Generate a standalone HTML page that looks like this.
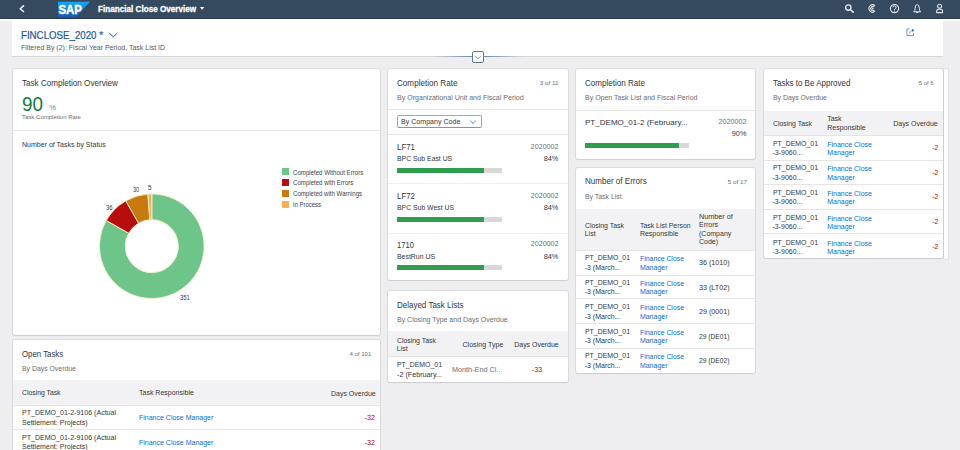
<!DOCTYPE html>
<html><head><meta charset="utf-8">
<style>
*{box-sizing:border-box;margin:0;padding:0}
html,body{width:960px;height:450px;overflow:hidden;background:#eeeef1;font-family:"Liberation Sans",sans-serif;color:#32363a}
.a{position:absolute}
#shell{position:absolute;left:0;top:0;width:960px;height:19px;background:#354a5f;border-bottom:1px solid #2a3b4c}
#wstrip{position:absolute;left:0;top:19px;width:960px;height:2px;background:#fff}
#hdr{position:absolute;left:12px;top:19px;width:931px;height:38px;background:#fff;border-bottom:1px solid #d5d7d9}
.card{position:absolute;background:#fff;border-radius:2px;box-shadow:0 0 0 1px rgba(0,0,0,.07),0 1px 1.5px rgba(0,0,0,.08);overflow:hidden}
.t{position:absolute;white-space:nowrap;line-height:1}
.hl{position:absolute;height:1px;background:#e5e5e5}
.th{position:absolute;background:#f2f2f4}
.bar{position:absolute;height:5px;background:#d8d8d8}
.bar i{position:absolute;left:0;top:0;bottom:0;background:#2f9c4e}
.lg{position:absolute;width:7px;height:7px}
</style></head><body>
<div id="shell">
  <svg class="a" style="left:0;top:0" width="960" height="19" viewBox="0 0 960 19">
    <path d="M24 5.4 L20.3 8.7 L24 12" fill="none" stroke="#eef2f6" stroke-width="1.5"/>
    <defs><linearGradient id="sapg" x1="0" y1="0" x2="0" y2="1"><stop offset="0" stop-color="#14a8ee"/><stop offset="0.55" stop-color="#1a7fd6"/><stop offset="1" stop-color="#1b53b3"/></linearGradient></defs>
    <path d="M58 1.7 H89.9 L76 17.3 H58 Z" fill="url(#sapg)"/>
    <text x="58.4" y="14.3" font-family="Liberation Sans" font-weight="bold" font-size="13.6" fill="#fff" stroke="#fff" stroke-width="0.5" textLength="23.4" lengthAdjust="spacingAndGlyphs">SAP</text>
    <path d="M199.9 6.9 H204.3 L202.1 9.7 Z" fill="#fff"/>
    <!-- search -->
    <circle cx="848.3" cy="7.6" r="2.7" fill="none" stroke="#e4e9ef" stroke-width="1.4"/>
    <path d="M850.3 9.6 L853.2 12.2" stroke="#e4e9ef" stroke-width="1.6" stroke-linecap="round"/>
    <!-- C icon -->
    <path d="M875.1 5.9 A3.6 3.6 0 1 0 875.1 11.1" fill="none" stroke="#e4e9ef" stroke-width="1.1"/>
    <path d="M874.2 7 A2.1 2.1 0 1 0 874.2 10" fill="none" stroke="#e4e9ef" stroke-width="1.1"/>
    <circle cx="872.6" cy="8.5" r="0.9" fill="#e4e9ef"/>
    <!-- help -->
    <circle cx="894.5" cy="8.6" r="4.1" fill="none" stroke="#e4e9ef" stroke-width="1.1"/>
    <path d="M892.9 7.3 A1.6 1.5 0 1 1 895.2 8.6 Q894.5 9.1 894.5 10" fill="none" stroke="#e4e9ef" stroke-width="1"/>
    <circle cx="894.5" cy="11.2" r="0.6" fill="#e4e9ef"/>
    <!-- bell -->
    <path d="M913.7 11.8 Q915.1 10.9 915.1 8.4 Q915.1 4.6 917.2 4.6 Q919.3 4.6 919.3 8.4 Q919.3 10.9 920.7 11.8 Z" fill="none" stroke="#e4e9ef" stroke-width="1" stroke-linejoin="round"/>
    <ellipse cx="917.2" cy="12.4" rx="1.2" ry="0.7" fill="#e4e9ef"/>
    <!-- user -->
    <circle cx="939.6" cy="6.3" r="2" fill="none" stroke="#e4e9ef" stroke-width="1.05"/>
    <path d="M936.7 12.6 V11 Q936.7 9.2 939.6 9.2 Q942.6 9.2 942.6 11 V12.6 Z" fill="none" stroke="#e4e9ef" stroke-width="1.05" stroke-linejoin="round"/>
  </svg>
</div>
<div id="wstrip"></div>
<div id="hdr">
  <svg class="a" style="left:0;top:0" width="931" height="38" viewBox="12 19 931 38">
    <path d="M109.2 33 L113.3 36.9 L117.4 33" fill="none" stroke="#1f5a96" stroke-width="1"/>
    <path d="M909.4 28.9 H906.9 V35.5 H913.5 V33.2" fill="none" stroke="#5d8cc4" stroke-width="0.9"/>
    <path d="M909.2 33.6 Q909.8 30.8 912.6 30.4" fill="none" stroke="#5d8cc4" stroke-width="0.8"/>
    <path d="M912 28.7 L914.4 30.3 L912.3 31.9 Z" fill="#2f66a6"/>
  </svg>
</div>
<!-- collapse line & button -->
<div class="a" style="left:432px;top:56.3px;width:92px;height:1.2px;background:linear-gradient(90deg,rgba(120,140,160,0),#7890a8 40%,#7890a8 60%,rgba(120,140,160,0))"></div>
<div class="a" style="left:471.5px;top:50.5px;width:12.5px;height:12.5px;border:1.2px solid #5f7892;border-radius:2px;background:#fff"></div>
<svg class="a" style="left:471px;top:50px" width="14" height="14"><path d="M4.3 6.3 L7 8.7 L9.7 6.3" fill="none" stroke="#5f7892" stroke-width="0.8"/></svg>

<!-- card 1 -->
<div class="card" style="left:12.6px;top:68.6px;width:367px;height:266.4px">
  <div class="hl" style="left:0;top:61.6px;width:367px"></div>
</div>
<svg class="a" style="left:0;top:0" width="960" height="450"><path d="M151.80 193.90 A52.3 52.3 0 1 1 106.25 220.50 L128.72 233.18 A26.5 26.5 0 1 0 151.80 219.70 Z" fill="#6dc58a" stroke="#fbf0d0" stroke-width="0.9"/><path d="M106.25 220.50 A52.3 52.3 0 0 1 125.76 200.84 L138.61 223.22 A26.5 26.5 0 0 0 128.72 233.18 Z" fill="#b80d0d" stroke="#fbf0d0" stroke-width="0.9"/><path d="M125.76 200.84 A52.3 52.3 0 0 1 147.91 194.04 L149.83 219.77 A26.5 26.5 0 0 0 138.61 223.22 Z" fill="#c8790f" stroke="#fbf0d0" stroke-width="0.9"/><path d="M147.91 194.04 A52.3 52.3 0 0 1 151.80 193.90 L151.80 219.70 A26.5 26.5 0 0 0 149.83 219.77 Z" fill="#f1b25a" stroke="#fbf0d0" stroke-width="0.9"/></svg>
<div class="lg" style="left:281.9px;top:168.1px;background:#6dc58a"></div>
<div class="lg" style="left:281.9px;top:179px;background:#b80d0d"></div>
<div class="lg" style="left:281.9px;top:189.9px;background:#c8790f"></div>
<div class="lg" style="left:281.9px;top:200.6px;background:#f1b25a"></div>

<!-- card 2 -->
<div class="card" style="left:12.6px;top:339.7px;width:367px;height:120px">
  <div class="th" style="left:0;top:40.3px;width:367px;height:26px;border-bottom:1px solid #e4e4e6"></div>
  <div class="hl" style="left:0;top:89.5px;width:367px"></div>
</div>

<!-- card 3 -->
<div class="card" style="left:388px;top:69px;width:180px;height:211px">
  <div class="hl" style="left:0;top:40px;width:180px"></div>
  <div class="a" style="left:8.5px;top:46.2px;width:85.5px;height:13px;border:1px solid #a3a8ad;border-bottom-color:#8d9297;border-radius:2px"></div>
  <svg class="a" style="left:0;top:0" width="180" height="213"><path d="M82.2 51.6 L85 54.3 L87.8 51.6" fill="none" stroke="#3f7fc4" stroke-width="0.9"/></svg>
  <div class="hl" style="left:0;top:64.7px;width:180px"></div>
  <div class="hl" style="left:0;top:113.8px;width:180px;background:#efefef"></div>
  <div class="hl" style="left:0;top:163.6px;width:180px;background:#efefef"></div>
</div>
<div class="bar" style="left:396.8px;top:167.7px;width:105.3px"><i style="width:87.2px"></i></div>
<div class="bar" style="left:396.8px;top:216.7px;width:105.3px"><i style="width:87.2px"></i></div>
<div class="bar" style="left:396.8px;top:265.3px;width:105.3px"><i style="width:87.2px"></i></div>

<!-- card 4 -->
<div class="card" style="left:388px;top:290.5px;width:180px;height:91px">
  <div class="th" style="left:0;top:40.2px;width:180px;height:26px;border-bottom:1px solid #e4e4e6"></div>
</div>

<!-- card 5 -->
<div class="card" style="left:576px;top:69px;width:179px;height:90px">
  <div class="hl" style="left:0;top:40.9px;width:179px"></div>
</div>
<div class="bar" style="left:584.7px;top:143.2px;width:104.8px"><i style="width:94.6px"></i></div>

<!-- card 6 -->
<div class="card" style="left:576px;top:168px;width:179px;height:205px">
  <div class="th" style="left:0;top:40.5px;width:179px;height:42.5px;border-bottom:1px solid #e4e4e6"></div>
  <div class="hl" style="left:0;top:106.8px;width:179px"></div>
  <div class="hl" style="left:0;top:129.6px;width:179px"></div>
  <div class="hl" style="left:0;top:154.9px;width:179px"></div>
  <div class="hl" style="left:0;top:179.5px;width:179px"></div>
</div>

<!-- card 7 -->
<div class="card" style="left:763.7px;top:69px;width:179px;height:189px">
  <div class="th" style="left:0;top:41.7px;width:179px;height:25px;border-bottom:1px solid #e4e4e6"></div>
  <div class="hl" style="left:0;top:90.6px;width:179px"></div>
  <div class="hl" style="left:0;top:115px;width:179px"></div>
  <div class="hl" style="left:0;top:139.6px;width:179px"></div>
  <div class="hl" style="left:0;top:164.2px;width:179px"></div>
</div>

<div class="a" style="left:943.5px;top:69px;width:4px;height:190px;background:#fff;box-shadow:0 0 0 1px rgba(0,0,0,.06)"></div>
<span class="t" style="left:97.80px;top:4.66px;font-size:8.4px;color:#ffffff;font-weight:bold;transform-origin:0 0;transform:scaleX(0.972);-webkit-text-stroke:0.3px #fff;">Financial Close Overview</span>
<span class="t" style="left:21.30px;top:30.63px;font-size:10.2px;color:#1f5a96;transform-origin:0 0;transform:scaleX(0.952);-webkit-text-stroke:0.2px #1f5a96;">FINCLOSE_2020 *</span>
<span class="t" style="left:21.30px;top:45.43px;font-size:6.9px;color:#55595d;transform-origin:0 0;transform:scaleX(1.015);">Filtered By (2): Fiscal Year Period, Task List ID</span>
<span class="t" style="left:22.00px;top:79.73px;font-size:8.2px;color:#32363a;transform-origin:0 0;transform:scaleX(0.989);">Task Completion Overview</span>
<span class="t" style="left:22.00px;top:93.67px;font-size:20.5px;color:#107e3e;transform-origin:0 0;transform:scaleX(0.921);">90</span>
<span class="t" style="left:48.80px;top:104.15px;font-size:7px;color:#3fa45b;transform-origin:0 0;transform:scaleX(1.125);">%</span>
<span class="t" style="left:22.00px;top:114.43px;font-size:6.2px;color:#6a6d70;transform-origin:0 0;transform:scaleX(0.973);">Task Completion Rate</span>
<span class="t" style="left:21.50px;top:141.21px;font-size:7.4px;color:#32363a;transform-origin:0 0;transform:scaleX(0.950);">Number of Tasks by Status</span>
<span class="t" style="left:180.00px;top:295.18px;font-size:6.5px;color:#32363a;transform-origin:0 0;transform:scaleX(0.894);">351</span>
<span class="t" style="left:106.00px;top:204.57px;font-size:6.5px;color:#32363a;transform-origin:0 0;transform:scaleX(0.899);">36</span>
<span class="t" style="left:132.80px;top:186.57px;font-size:6.5px;color:#32363a;transform-origin:0 0;transform:scaleX(0.858);">30</span>
<span class="t" style="left:147.80px;top:185.07px;font-size:6.5px;color:#32363a;transform-origin:0 0;transform:scaleX(0.968);">5</span>
<span class="t" style="left:292.60px;top:169.57px;font-size:6.5px;color:#3d4145;transform-origin:0 0;transform:scaleX(0.939);">Completed Without Errors</span>
<span class="t" style="left:292.60px;top:180.32px;font-size:6.5px;color:#3d4145;transform-origin:0 0;transform:scaleX(0.939);">Completed with Errors</span>
<span class="t" style="left:292.60px;top:191.07px;font-size:6.5px;color:#3d4145;transform-origin:0 0;transform:scaleX(0.936);">Completed with Warnings</span>
<span class="t" style="left:292.60px;top:201.82px;font-size:6.5px;color:#3d4145;transform-origin:0 0;transform:scaleX(0.909);">In Process</span>
<span class="t" style="left:21.70px;top:351.13px;font-size:8.2px;color:#32363a;transform-origin:0 0;transform:scaleX(0.954);">Open Tasks</span>
<span class="t" style="left:348.59px;top:350.53px;font-size:6.2px;color:#6a6d70;transform-origin:22.41px 0;transform:scaleX(0.982);">4 of 101</span>
<span class="t" style="left:21.70px;top:365.18px;font-size:7.2px;color:#6a6d70;transform-origin:0 0;transform:scaleX(0.957);">By Days Overdue</span>
<span class="t" style="left:21.70px;top:389.35px;font-size:7.0px;color:#32363a;transform-origin:0 0;transform:scaleX(0.973);">Closing Task</span>
<span class="t" style="left:139.00px;top:389.35px;font-size:7.0px;color:#32363a;">Task Responsible</span>
<span class="t" style="left:330.66px;top:389.55px;font-size:7.0px;color:#32363a;transform-origin:44.74px 0;transform:scaleX(1.001);">Days Overdue</span>
<span class="t" style="left:21.60px;top:409.35px;font-size:7.0px;color:#32363a;transform-origin:0 0;transform:scaleX(1.007);">PT_DEMO_01-2-9106 (Actual</span>
<span class="t" style="left:21.60px;top:418.95px;font-size:7.0px;color:#32363a;transform-origin:0 0;transform:scaleX(1.011);">Settlement: Projects)</span>
<span class="t" style="left:139.00px;top:414.05px;font-size:7.0px;color:#0a6ed1;">Finance Close Manager</span>
<span class="t" style="left:365.28px;top:414.45px;font-size:7.0px;color:#bb0000;transform-origin:10.12px 0;transform:scaleX(1.028);">-32</span>
<span class="t" style="left:21.60px;top:433.85px;font-size:7.0px;color:#32363a;transform-origin:0 0;transform:scaleX(1.007);">PT_DEMO_01-2-9106 (Actual</span>
<span class="t" style="left:21.60px;top:443.45px;font-size:7.0px;color:#32363a;transform-origin:0 0;transform:scaleX(1.011);">Settlement: Projects)</span>
<span class="t" style="left:139.00px;top:438.55px;font-size:7.0px;color:#0a6ed1;">Finance Close Manager</span>
<span class="t" style="left:365.28px;top:438.95px;font-size:7.0px;color:#bb0000;transform-origin:10.12px 0;transform:scaleX(1.028);">-32</span>
<span class="t" style="left:396.80px;top:80.33px;font-size:8.2px;color:#32363a;transform-origin:0 0;transform:scaleX(0.991);">Completion Rate</span>
<span class="t" style="left:540.20px;top:80.13px;font-size:6.2px;color:#6a6d70;transform-origin:18.50px 0;transform:scaleX(1.011);">3 of 11</span>
<span class="t" style="left:396.80px;top:94.48px;font-size:7.2px;color:#6a6d70;transform-origin:0 0;transform:scaleX(0.982);">By Organizational Unit and Fiscal Period</span>
<span class="t" style="left:401.30px;top:118.31px;font-size:7.4px;color:#32363a;transform-origin:0 0;transform:scaleX(0.958);">By Company Code</span>
<span class="t" style="left:396.80px;top:142.86px;font-size:8.4px;color:#32363a;transform-origin:0 0;transform:scaleX(0.940);">LF71</span>
<span class="t" style="left:532.23px;top:143.62px;font-size:6.8px;color:#6a6d70;transform-origin:26.47px 0;transform:scaleX(1.046);">2020002</span>
<span class="t" style="left:396.80px;top:155.25px;font-size:7.0px;color:#32363a;transform-origin:0 0;transform:scaleX(0.978);">BPC Sub East US</span>
<span class="t" style="left:544.29px;top:154.88px;font-size:7.2px;color:#32363a;transform-origin:14.41px 0;transform:scaleX(1.020);">84%</span>
<span class="t" style="left:396.80px;top:191.76px;font-size:8.4px;color:#32363a;transform-origin:0 0;transform:scaleX(0.940);">LF72</span>
<span class="t" style="left:532.23px;top:192.52px;font-size:6.8px;color:#6a6d70;transform-origin:26.47px 0;transform:scaleX(1.046);">2020002</span>
<span class="t" style="left:396.80px;top:204.15px;font-size:7.0px;color:#32363a;transform-origin:0 0;transform:scaleX(0.979);">BPC Sub West US</span>
<span class="t" style="left:544.29px;top:203.78px;font-size:7.2px;color:#32363a;transform-origin:14.41px 0;transform:scaleX(1.020);">84%</span>
<span class="t" style="left:396.80px;top:240.66px;font-size:8.4px;color:#32363a;transform-origin:0 0;transform:scaleX(0.910);">1710</span>
<span class="t" style="left:532.23px;top:241.42px;font-size:6.8px;color:#6a6d70;transform-origin:26.47px 0;transform:scaleX(1.046);">2020002</span>
<span class="t" style="left:396.80px;top:253.05px;font-size:7.0px;color:#32363a;transform-origin:0 0;transform:scaleX(0.987);">BestRun US</span>
<span class="t" style="left:544.29px;top:252.68px;font-size:7.2px;color:#32363a;transform-origin:14.41px 0;transform:scaleX(1.020);">84%</span>
<span class="t" style="left:396.80px;top:301.93px;font-size:8.2px;color:#32363a;transform-origin:0 0;transform:scaleX(0.976);">Delayed Task Lists</span>
<span class="t" style="left:396.80px;top:315.78px;font-size:7.2px;color:#6a6d70;transform-origin:0 0;transform:scaleX(0.973);">By Closing Type and Days Overdue</span>
<span class="t" style="left:396.80px;top:336.75px;font-size:7.0px;color:#32363a;transform-origin:0 0;transform:scaleX(0.983);">Closing Task</span>
<span class="t" style="left:396.80px;top:344.55px;font-size:7.0px;color:#32363a;">List</span>
<span class="t" style="left:462.73px;top:341.35px;font-size:7.0px;color:#32363a;transform-origin:40.47px 0;transform:scaleX(1.013);">Closing Type</span>
<span class="t" style="left:514.46px;top:341.35px;font-size:7.0px;color:#32363a;transform-origin:44.74px 0;transform:scaleX(0.995);">Days Overdue</span>
<span class="t" style="left:396.80px;top:360.55px;font-size:7.0px;color:#32363a;transform-origin:0 0;transform:scaleX(0.989);">PT_DEMO_01</span>
<span class="t" style="left:396.80px;top:370.65px;font-size:7.0px;color:#32363a;transform-origin:0 0;transform:scaleX(1.027);">-2 (February...</span>
<span class="t" style="left:451.50px;top:366.15px;font-size:7.0px;color:#6a6d70;transform-origin:0 0;transform:scaleX(1.036);">Month-End Cl...</span>
<span class="t" style="left:531.88px;top:366.15px;font-size:7.0px;color:#bb0000;transform-origin:10.12px 0;transform:scaleX(0.988);">-33</span>
<span class="t" style="left:584.70px;top:80.33px;font-size:8.2px;color:#32363a;transform-origin:0 0;transform:scaleX(0.982);">Completion Rate</span>
<span class="t" style="left:584.70px;top:94.48px;font-size:7.2px;color:#6a6d70;transform-origin:0 0;transform:scaleX(0.975);">By Open Task List and Fiscal Period</span>
<span class="t" style="left:584.70px;top:119.27px;font-size:7.8px;color:#32363a;transform-origin:0 0;transform:scaleX(1.031);">PT_DEMO_01-2 (February...</span>
<span class="t" style="left:720.03px;top:119.32px;font-size:6.8px;color:#6a6d70;transform-origin:26.47px 0;transform:scaleX(1.058);">2020002</span>
<span class="t" style="left:732.09px;top:129.98px;font-size:7.2px;color:#32363a;transform-origin:14.41px 0;transform:scaleX(1.013);">90%</span>
<span class="t" style="left:584.70px;top:178.13px;font-size:8.2px;color:#32363a;transform-origin:0 0;transform:scaleX(0.983);">Number of Errors</span>
<span class="t" style="left:727.54px;top:178.53px;font-size:6.2px;color:#6a6d70;transform-origin:18.96px 0;transform:scaleX(1.013);">5 of 17</span>
<span class="t" style="left:584.70px;top:193.18px;font-size:7.2px;color:#6a6d70;transform-origin:0 0;transform:scaleX(0.958);">By Task List</span>
<span class="t" style="left:584.70px;top:221.65px;font-size:7.0px;color:#32363a;transform-origin:0 0;transform:scaleX(0.983);">Closing Task</span>
<span class="t" style="left:584.70px;top:229.85px;font-size:7.0px;color:#32363a;">List</span>
<span class="t" style="left:639.90px;top:221.65px;font-size:7.0px;color:#32363a;transform-origin:0 0;transform:scaleX(0.985);">Task List Person</span>
<span class="t" style="left:639.90px;top:229.85px;font-size:7.0px;color:#32363a;">Responsible</span>
<span class="t" style="left:699.00px;top:213.05px;font-size:7.0px;color:#32363a;transform-origin:0 0;transform:scaleX(1.031);">Number of</span>
<span class="t" style="left:699.00px;top:221.45px;font-size:7.0px;color:#32363a;">Errors</span>
<span class="t" style="left:699.00px;top:229.85px;font-size:7.0px;color:#32363a;">(Company</span>
<span class="t" style="left:699.00px;top:238.05px;font-size:7.0px;color:#32363a;">Code)</span>
<span class="t" style="left:584.70px;top:254.45px;font-size:7.0px;color:#32363a;transform-origin:0 0;transform:scaleX(0.989);">PT_DEMO_01</span>
<span class="t" style="left:584.70px;top:263.65px;font-size:7.0px;color:#32363a;">-3 (March...</span>
<span class="t" style="left:639.90px;top:255.35px;font-size:7.0px;color:#0a6ed1;transform-origin:0 0;transform:scaleX(0.983);">Finance Close</span>
<span class="t" style="left:639.90px;top:263.65px;font-size:7.0px;color:#0a6ed1;">Manager</span>
<span class="t" style="left:699.00px;top:259.05px;font-size:7.0px;color:#32363a;transform-origin:0 0;transform:scaleX(1.018);">36 (1010)</span>
<span class="t" style="left:584.70px;top:278.95px;font-size:7.0px;color:#32363a;transform-origin:0 0;transform:scaleX(0.989);">PT_DEMO_01</span>
<span class="t" style="left:584.70px;top:288.15px;font-size:7.0px;color:#32363a;">-3 (March...</span>
<span class="t" style="left:639.90px;top:279.85px;font-size:7.0px;color:#0a6ed1;transform-origin:0 0;transform:scaleX(0.983);">Finance Close</span>
<span class="t" style="left:639.90px;top:288.15px;font-size:7.0px;color:#0a6ed1;">Manager</span>
<span class="t" style="left:699.00px;top:283.55px;font-size:7.0px;color:#32363a;transform-origin:0 0;transform:scaleX(1.023);">33 (LT02)</span>
<span class="t" style="left:584.70px;top:303.45px;font-size:7.0px;color:#32363a;transform-origin:0 0;transform:scaleX(0.989);">PT_DEMO_01</span>
<span class="t" style="left:584.70px;top:312.65px;font-size:7.0px;color:#32363a;">-3 (March...</span>
<span class="t" style="left:639.90px;top:304.35px;font-size:7.0px;color:#0a6ed1;transform-origin:0 0;transform:scaleX(0.983);">Finance Close</span>
<span class="t" style="left:639.90px;top:312.65px;font-size:7.0px;color:#0a6ed1;">Manager</span>
<span class="t" style="left:699.00px;top:308.05px;font-size:7.0px;color:#32363a;transform-origin:0 0;transform:scaleX(1.018);">29 (0001)</span>
<span class="t" style="left:584.70px;top:327.95px;font-size:7.0px;color:#32363a;transform-origin:0 0;transform:scaleX(0.989);">PT_DEMO_01</span>
<span class="t" style="left:584.70px;top:337.15px;font-size:7.0px;color:#32363a;">-3 (March...</span>
<span class="t" style="left:639.90px;top:328.85px;font-size:7.0px;color:#0a6ed1;transform-origin:0 0;transform:scaleX(0.983);">Finance Close</span>
<span class="t" style="left:639.90px;top:337.15px;font-size:7.0px;color:#0a6ed1;">Manager</span>
<span class="t" style="left:699.00px;top:332.55px;font-size:7.0px;color:#32363a;transform-origin:0 0;transform:scaleX(0.956);">29 (DE01)</span>
<span class="t" style="left:584.70px;top:352.45px;font-size:7.0px;color:#32363a;transform-origin:0 0;transform:scaleX(0.989);">PT_DEMO_01</span>
<span class="t" style="left:584.70px;top:361.65px;font-size:7.0px;color:#32363a;">-3 (March...</span>
<span class="t" style="left:639.90px;top:353.35px;font-size:7.0px;color:#0a6ed1;transform-origin:0 0;transform:scaleX(0.983);">Finance Close</span>
<span class="t" style="left:639.90px;top:361.65px;font-size:7.0px;color:#0a6ed1;">Manager</span>
<span class="t" style="left:699.00px;top:357.05px;font-size:7.0px;color:#32363a;transform-origin:0 0;transform:scaleX(0.956);">29 (DE02)</span>
<span class="t" style="left:772.50px;top:80.33px;font-size:8.2px;color:#32363a;transform-origin:0 0;transform:scaleX(0.978);">Tasks to Be Approved</span>
<span class="t" style="left:918.39px;top:80.13px;font-size:6.2px;color:#6a6d70;transform-origin:15.51px 0;transform:scaleX(0.948);">5 of 6</span>
<span class="t" style="left:772.50px;top:94.48px;font-size:7.2px;color:#6a6d70;transform-origin:0 0;transform:scaleX(0.957);">By Days Overdue</span>
<span class="t" style="left:772.50px;top:119.95px;font-size:7.0px;color:#32363a;transform-origin:0 0;transform:scaleX(0.983);">Closing Task</span>
<span class="t" style="left:827.20px;top:115.45px;font-size:7.0px;color:#32363a;">Task</span>
<span class="t" style="left:827.20px;top:123.95px;font-size:7.0px;color:#32363a;">Responsible</span>
<span class="t" style="left:893.16px;top:119.95px;font-size:7.0px;color:#32363a;transform-origin:44.74px 0;transform:scaleX(0.995);">Days Overdue</span>
<span class="t" style="left:772.50px;top:139.65px;font-size:7.0px;color:#32363a;transform-origin:0 0;transform:scaleX(0.989);">PT_DEMO_01</span>
<span class="t" style="left:772.50px;top:148.95px;font-size:7.0px;color:#32363a;">-3-9060...</span>
<span class="t" style="left:827.20px;top:140.55px;font-size:7.0px;color:#0a6ed1;">Finance Close</span>
<span class="t" style="left:827.20px;top:148.95px;font-size:7.0px;color:#0a6ed1;">Manager</span>
<span class="t" style="left:931.68px;top:143.85px;font-size:7.0px;color:#bb0000;transform-origin:6.22px 0;transform:scaleX(0.964);">-2</span>
<span class="t" style="left:772.50px;top:164.40px;font-size:7.0px;color:#32363a;transform-origin:0 0;transform:scaleX(0.989);">PT_DEMO_01</span>
<span class="t" style="left:772.50px;top:173.70px;font-size:7.0px;color:#32363a;">-3-9060...</span>
<span class="t" style="left:827.20px;top:165.30px;font-size:7.0px;color:#0a6ed1;">Finance Close</span>
<span class="t" style="left:827.20px;top:173.70px;font-size:7.0px;color:#0a6ed1;">Manager</span>
<span class="t" style="left:931.68px;top:168.60px;font-size:7.0px;color:#bb0000;transform-origin:6.22px 0;transform:scaleX(0.964);">-2</span>
<span class="t" style="left:772.50px;top:189.15px;font-size:7.0px;color:#32363a;transform-origin:0 0;transform:scaleX(0.989);">PT_DEMO_01</span>
<span class="t" style="left:772.50px;top:198.45px;font-size:7.0px;color:#32363a;">-3-9060...</span>
<span class="t" style="left:827.20px;top:190.05px;font-size:7.0px;color:#0a6ed1;">Finance Close</span>
<span class="t" style="left:827.20px;top:198.45px;font-size:7.0px;color:#0a6ed1;">Manager</span>
<span class="t" style="left:931.68px;top:193.35px;font-size:7.0px;color:#bb0000;transform-origin:6.22px 0;transform:scaleX(0.964);">-2</span>
<span class="t" style="left:772.50px;top:213.90px;font-size:7.0px;color:#32363a;transform-origin:0 0;transform:scaleX(0.989);">PT_DEMO_01</span>
<span class="t" style="left:772.50px;top:223.20px;font-size:7.0px;color:#32363a;">-3-9060...</span>
<span class="t" style="left:827.20px;top:214.80px;font-size:7.0px;color:#0a6ed1;">Finance Close</span>
<span class="t" style="left:827.20px;top:223.20px;font-size:7.0px;color:#0a6ed1;">Manager</span>
<span class="t" style="left:931.68px;top:218.10px;font-size:7.0px;color:#bb0000;transform-origin:6.22px 0;transform:scaleX(0.964);">-2</span>
<span class="t" style="left:772.50px;top:238.65px;font-size:7.0px;color:#32363a;transform-origin:0 0;transform:scaleX(0.989);">PT_DEMO_01</span>
<span class="t" style="left:772.50px;top:247.95px;font-size:7.0px;color:#32363a;">-3-9060...</span>
<span class="t" style="left:827.20px;top:239.55px;font-size:7.0px;color:#0a6ed1;">Finance Close</span>
<span class="t" style="left:827.20px;top:247.95px;font-size:7.0px;color:#0a6ed1;">Manager</span>
<span class="t" style="left:931.68px;top:242.85px;font-size:7.0px;color:#bb0000;transform-origin:6.22px 0;transform:scaleX(0.964);">-2</span>
</body></html>
